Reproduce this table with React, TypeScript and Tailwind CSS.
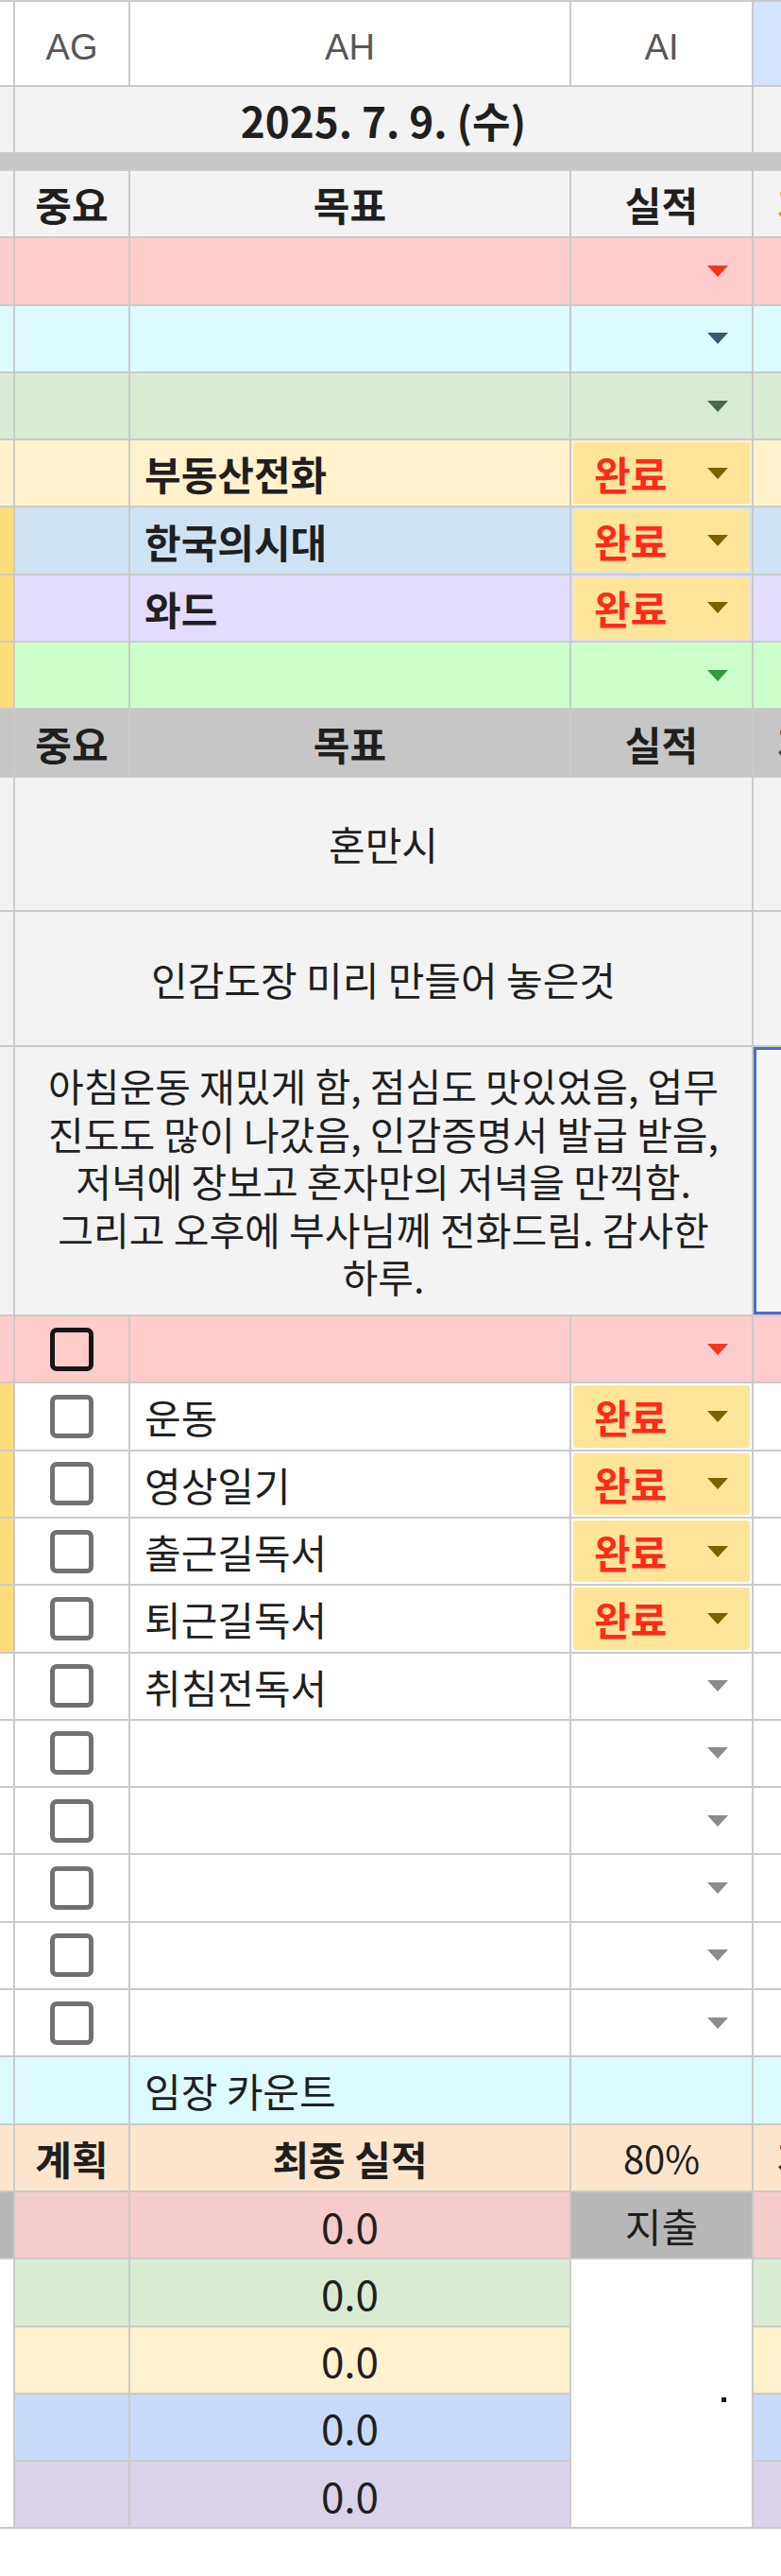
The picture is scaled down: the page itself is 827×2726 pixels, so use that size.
import React from 'react';

type Tone = 'red' | 'navy' | 'moss' | 'olive' | 'green' | 'gray';

const TONES: Record<Tone, string> = {
  red: '#f4361e',
  navy: '#3b5670',
  moss: '#4b6b46',
  olive: '#7f6000',
  green: '#2f9b3c',
  gray: '#8b8b8b',
};

const ORANGE = 'bg-[#ffdc7a]';
const GRAY = 'bg-[#f3f3f3]';

type GoalRow = {
  row: string;
  left: string;
  right: string;
  text: string;
  tone: Tone;
  done?: boolean;
};

const goals: GoalRow[] = [
  { row: 'bg-[#ffcccc]', left: 'bg-[#ffcccc]', right: 'bg-[#ffcccc]', text: '', tone: 'red' },
  { row: 'bg-[#dcfaff]', left: 'bg-[#dcfaff]', right: 'bg-[#dcfaff]', text: '', tone: 'navy' },
  { row: 'bg-[#d9ead3]', left: 'bg-[#d9ead3]', right: 'bg-[#d9ead3]', text: '', tone: 'moss' },
  { row: 'bg-[#fff2cc]', left: 'bg-[#fff2cc]', right: 'bg-[#fff2cc]', text: '부동산전화', tone: 'olive', done: true },
  { row: 'bg-[#cfe2f3]', left: ORANGE, right: 'bg-[#cfe2f3]', text: '한국의시대', tone: 'olive', done: true },
  { row: 'bg-[#e4dcfc]', left: ORANGE, right: 'bg-[#e4dcfc]', text: '와드', tone: 'olive', done: true },
  { row: 'bg-[#ccffcc]', left: ORANGE, right: 'bg-[#ccffcc]', text: '', tone: 'green' },
];

type CheckRow = {
  row: string;
  left: string;
  right: string;
  text: string;
  tone: Tone;
  done?: boolean;
  dark?: boolean;
};

const blank: CheckRow = { row: 'bg-white', left: 'bg-white', right: 'bg-white', text: '', tone: 'gray' };

const checks: CheckRow[] = [
  { row: 'bg-[#ffcccc]', left: 'bg-[#ffcccc]', right: 'bg-[#ffcccc]', text: '', tone: 'red', dark: true },
  { ...blank, left: ORANGE, text: '운동', tone: 'olive', done: true },
  { ...blank, left: ORANGE, text: '영상일기', tone: 'olive', done: true },
  { ...blank, left: ORANGE, text: '출근길독서', tone: 'olive', done: true },
  { ...blank, left: ORANGE, text: '퇴근길독서', tone: 'olive', done: true },
  { ...blank, text: '취침전독서' },
  blank,
  blank,
  blank,
  blank,
  blank,
];

const totals = ['bg-[#f4cccc]', 'bg-[#d9ead3]', 'bg-[#fff2cc]', 'bg-[#c9daf8]', 'bg-[#d9d2e9]'];

const diary = [
  '아침운동 재밌게 함, 점심도 맛있었음, 업무',
  '진도도 많이 나갔음, 인감증명서 발급 받음,',
  '저녁에 장보고 혼자만의 저녁을 만끽함.',
  '그리고 오후에 부사님께 전화드림. 감사한',
  '하루.',
];

function Caret({ tone }: { tone: Tone }) {
  return (
    <svg width="22" height="12" viewBox="0 0 22 12" className="block shrink-0">
      <polygon points="0,0 22,0 11,12" fill={TONES[tone]} />
    </svg>
  );
}

function Status({ bg, tone, done }: { bg: string; tone: Tone; done?: boolean }) {
  if (done) {
    return (
      <div className={`flex p-[2px] ${bg}`}>
        <div className="flex flex-1 items-center justify-between rounded-[3px] bg-[#ffe599] pl-[22px] pr-[23px]">
          <span className="text-[42px] font-bold leading-none text-[#ff2a1a]">완료</span>
          <Caret tone={tone} />
        </div>
      </div>
    );
  }
  return (
    <div className={`flex items-center justify-end pr-[25px] ${bg}`}>
      <Caret tone={tone} />
    </div>
  );
}

function Box({ dark }: { dark?: boolean }) {
  return (
    <div
      className={`size-[46px] rounded-[7px] border-[5px] ${dark ? 'border-[#151515]' : 'border-[#717171]'}`}
    />
  );
}

// the neighbouring column only shows the first few pixels of its text
function Sliver({ bg, color, text }: { bg: string; color: string; text: string }) {
  return (
    <div className={`flex items-center overflow-hidden whitespace-nowrap pl-[25px] ${bg}`}>
      <span className={`text-[42px] font-bold leading-none ${color}`}>{text}</span>
    </div>
  );
}

export default function App() {
  return (
    <div className="min-h-[2726px] w-full bg-white font-['Noto_Sans_CJK_KR','Noto_Sans',sans-serif] text-[#1f1f1f]">
      <div className="grid grid-cols-[14px_120px_465px_191px_29px] grid-rows-[88px_69px_16px] auto-rows-[69.3px] gap-[2px] bg-[#cacaca] pt-[2px] pb-[2px]">
        {/* column letters */}
        <div className="bg-white" />
        {['AG', 'AH', 'AI'].map((c) => (
          <div key={c} className="flex items-center justify-center bg-white pt-[8px] font-['Liberation_Sans',sans-serif] text-[38px] leading-none text-[#575757]">
            {c}
          </div>
        ))}
        <div className="bg-[#d3e3fd]" />

        {/* date */}
        <div className={GRAY} />
        <div className={`col-span-3 flex items-center justify-center ${GRAY}`}>
          <span className="text-[44px] font-bold leading-none">2025. 7. 9. (수)</span>
        </div>
        <div className={GRAY} />

        <div className="col-span-5 bg-[#c6c6c6]" />

        {/* goals header */}
        <div className={GRAY} />
        <div className={`flex items-center justify-center text-[42px] font-bold ${GRAY}`}>중요</div>
        <div className={`flex items-center justify-center text-[42px] font-bold ${GRAY}`}>목표</div>
        <div className={`flex items-center justify-center text-[42px] font-bold ${GRAY}`}>실적</div>
        <Sliver bg={GRAY} color="text-[#d9a300]" text="계" />

        {goals.map((g, i) => (
          <React.Fragment key={`g${i}`}>
            <div className={g.left} />
            <div className={g.row} />
            <div className={`flex items-center pl-[15px] text-[42px] font-bold ${g.row}`}>{g.text}</div>
            <Status bg={g.row} tone={g.tone} done={g.done} />
            <div className={g.right} />
          </React.Fragment>
        ))}

        {/* second header */}
        <div className="bg-[#c6c6c6]" />
        <div className="flex items-center justify-center bg-[#c6c6c6] text-[42px] font-bold">중요</div>
        <div className="flex items-center justify-center bg-[#c6c6c6] text-[42px] font-bold">목표</div>
        <div className="flex items-center justify-center bg-[#c6c6c6] text-[42px] font-bold">실적</div>
        <Sliver bg="bg-[#c6c6c6]" color="text-[#3a3a3a]" text="계" />

        {/* notes */}
        <div className={`row-span-2 ${GRAY}`} />
        <div className={`col-span-3 row-span-2 flex items-center justify-center text-[42px] ${GRAY}`}>혼만시</div>
        <div className={`row-span-2 ${GRAY}`} />

        <div className={`row-span-2 ${GRAY}`} />
        <div className={`col-span-3 row-span-2 flex items-center justify-center text-[42px] ${GRAY}`}>
          인감도장 미리 만들어 놓은것
        </div>
        <div className={`row-span-2 ${GRAY}`} />

        <div className={`row-span-4 ${GRAY}`} />
        <div className={`col-span-3 row-span-4 flex flex-col items-center justify-center text-[41px] leading-[50.5px] ${GRAY}`}>
          {diary.map((line) => (
            <span key={line} className="whitespace-nowrap">
              {line}
            </span>
          ))}
        </div>
        <div className="row-span-4 border-[3px] border-r-0 border-[#4a6bd0] bg-[#f5f5f5]" />

        {/* checklist */}
        {checks.map((c, i) => (
          <React.Fragment key={`c${i}`}>
            <div className={c.left} />
            <div className={`flex items-center justify-center ${c.row}`}>
              <Box dark={c.dark} />
            </div>
            <div className={`flex items-center pl-[15px] text-[42px] ${c.row}`}>{c.text}</div>
            <Status bg={c.row} tone={c.tone} done={c.done} />
            <div className={c.right} />
          </React.Fragment>
        ))}

        {/* count */}
        <div className="bg-[#dcfaff]" />
        <div className="bg-[#dcfaff]" />
        <div className="flex items-center bg-[#dcfaff] pl-[15px] text-[42px]">임장 카운트</div>
        <div className="bg-[#dcfaff]" />
        <div className="bg-[#dcfaff]" />

        {/* summary */}
        <div className="bg-[#fce5cd]" />
        <div className="flex items-center justify-center bg-[#fce5cd] text-[42px] font-bold">계획</div>
        <div className="flex items-center justify-center bg-[#fce5cd] text-[42px] font-bold">최종 실적</div>
        <div className="flex items-center justify-center bg-[#fce5cd] text-[40px]">80%</div>
        <Sliver bg="bg-[#fce5cd]" color="text-[#2a2a2a]" text="계" />

        {totals.map((bg, i) => (
          <React.Fragment key={`t${i}`}>
            {i === 0 && <div className="bg-[#b7b7b7]" />}
            {i === 1 && <div className="row-span-4 bg-white" />}
            <div className={bg} />
            <div className={`flex items-center justify-center text-[44px] ${bg}`}>0.0</div>
            {i === 0 && (
              <div className="flex items-center justify-center bg-[#b7b7b7] text-[42px]">지출</div>
            )}
            {i === 1 && (
              <div className="row-span-4 flex items-center justify-end bg-white pr-[27px] pt-[14px]">
                <span className="size-[5px] bg-[#111]" />
              </div>
            )}
            <div className={bg} />
          </React.Fragment>
        ))}
      </div>
    </div>
  );
}
